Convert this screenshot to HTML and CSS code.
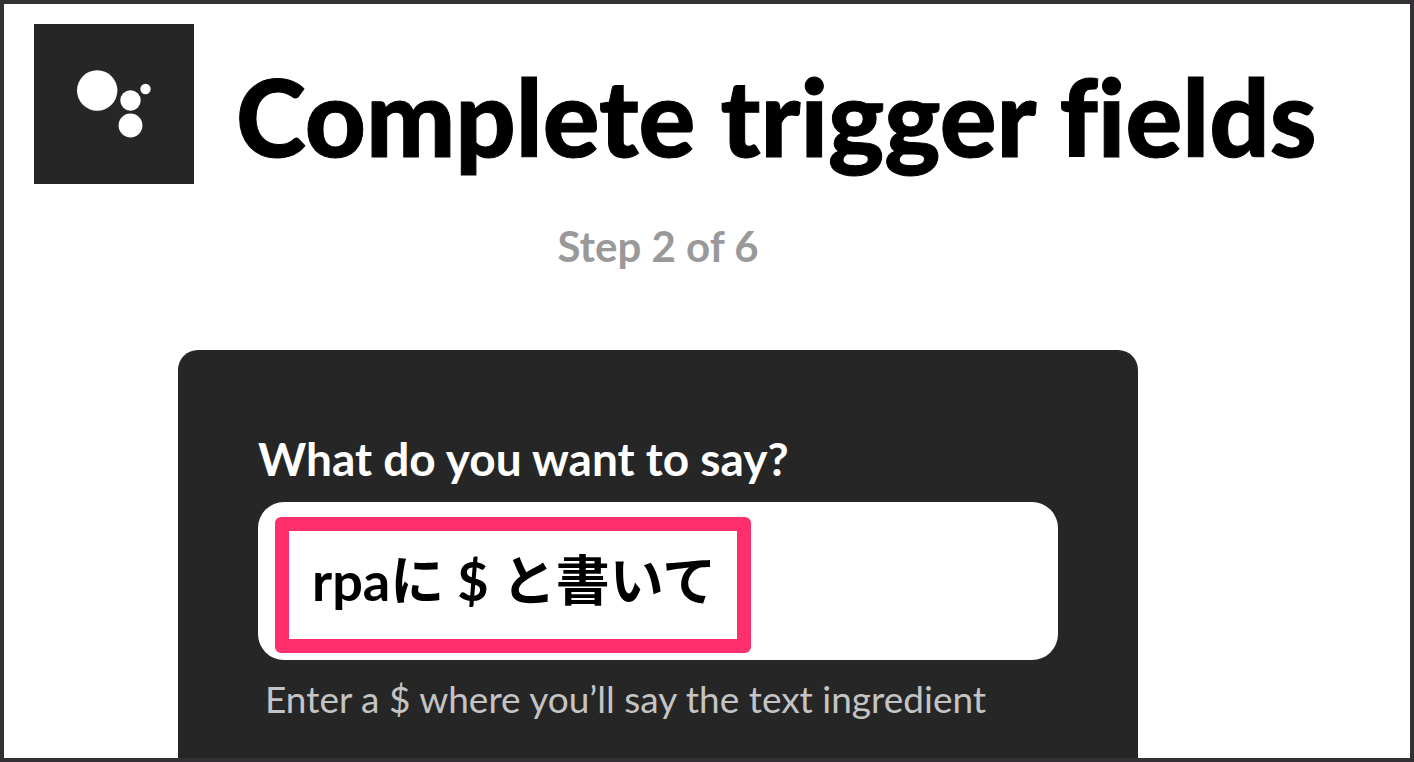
FILE: index.html
```html
<!DOCTYPE html>
<html lang="en">
<head>
<meta charset="utf-8">
<title>Complete trigger fields</title>
<link rel="stylesheet" href="styles.css">
</head>
<body>
<main class="page">
  <header class="header">
    <svg class="logo" viewBox="0 0 160 160" aria-hidden="true">
      <rect width="160" height="160" fill="#262626"/>
      <g fill="#fff"><circle cx="63.2" cy="66.5" r="20.2"/><circle cx="96.5" cy="76.5" r="10.2"/><circle cx="111.5" cy="65" r="5.2"/><circle cx="96.5" cy="101.5" r="11.9"/></g>
    </svg>
    <h1 class="title">Complete trigger fields</h1>
  </header>
  <p class="step">Step 2 of 6</p>
  <form class="card">
    <label class="label" for="phrase">What do you want to say?</label>
    <div class="field">
      <input class="input" id="phrase" type="text" value="rpaに $ と書いて" aria-describedby="hint">
      <span class="highlight"></span>
    </div>
    <p class="hint" id="hint">Enter a $ where you’ll say the text ingredient</p>
  </form>
</main>
</body>
</html>
```
FILE: styles.css
```css
* { box-sizing: border-box; }
body { margin: 0; font-family: Lato, "Noto Sans CJK JP", sans-serif; background: #fff; }
.page {
  height: 100vh;
  overflow: hidden;
  border: 4px solid #333133;
  display: flex;
  flex-direction: column;
}
.header { display: flex; gap: 42px; padding: 20px 30px 0; }
.logo { width: 160px; height: 160px; flex: none; }
.title {
  margin: 0;
  padding-top: 30px;
  font-size: 106px;
  line-height: 124px;
  font-weight: 900;
  font-variant-ligatures: none;
  -webkit-text-stroke: 1px #000;
  white-space: nowrap;
  color: #000;
}
.step { margin: 35px 98px 0 0; text-align: center; font-size: 42px; line-height: 54px; font-weight: 700; color: #999; }
.card {
  flex: 1 0 auto;
  margin: 77px 272px 0 174px;
  padding: 79px 80px 0;
  border-radius: 20px 20px 0 0;
  background: #262626;
}
.label { display: block; font-size: 46px; line-height: 60px; font-weight: 700; color: #fff; }
.field { position: relative; margin-top: 13px; }
.input {
  display: block;
  width: 100%;
  height: 158px;
  padding: 0 54px 8px;
  border: 0;
  border-radius: 26px;
  outline: 0;
  background: #fff;
  color: #000;
  font: 700 54px Lato, "Noto Sans CJK JP", sans-serif;
}
.highlight {
  position: absolute;
  left: 17px;
  top: 15px;
  width: 476px;
  height: 136px;
  border: 14px solid #ff2f6d;
  border-radius: 6px;
  pointer-events: none;
}
.hint { margin: 15px 7px 0; font-size: 37px; line-height: 48px; color: #c4c4c4; white-space: nowrap; }
```
